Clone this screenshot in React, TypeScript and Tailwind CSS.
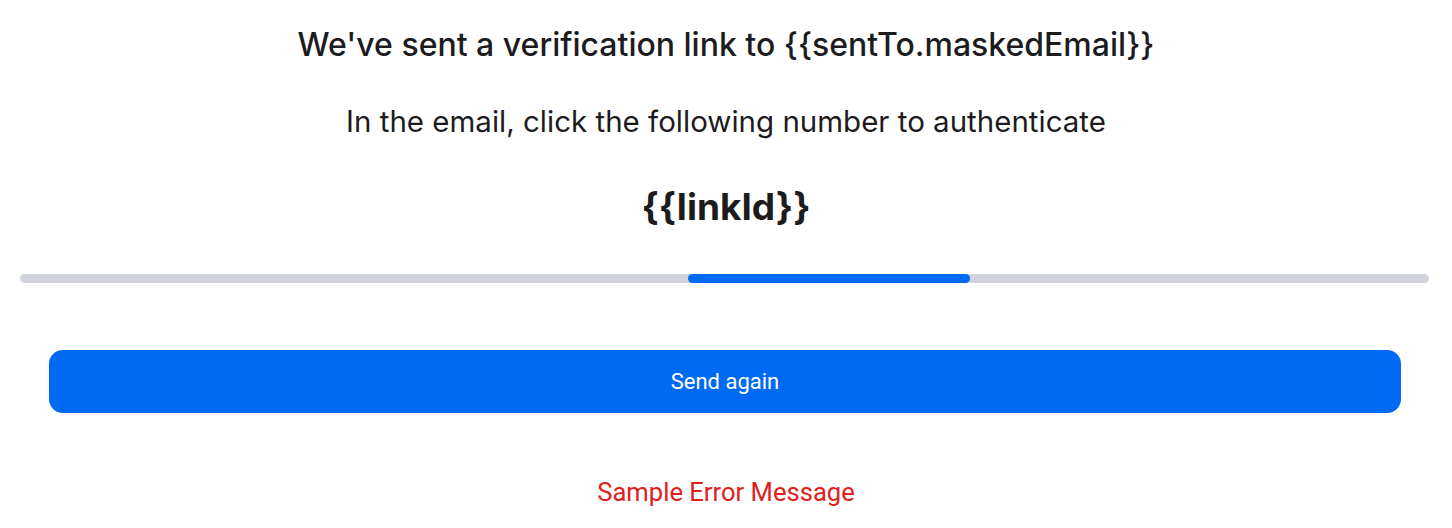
export default function App() {
  return (
    <div className="w-[1452px] h-[528px] bg-white flex flex-col items-center overflow-hidden" style={{ fontFamily: "Inter, 'Noto Sans', sans-serif" }}>
      <h1 className="mt-[25px] text-[32px] leading-[40px] font-medium text-[#1c1c1e]">
        We've sent a verification link to {"{{sentTo.maskedEmail}}"}
      </h1>
      <p className="mt-[38px] text-[29.5px] leading-[36px] text-[#1c1c1e]">
        In the email, click the following number to authenticate
      </p>
      <p className="mt-[46px] text-[37px] leading-[44px] font-bold text-[#1c1c1e]">{"{{linkId}}"}</p>

      {/* Progress */}
      <div className="self-start ml-[20px] mt-[45px] w-[1409px] h-[9px] rounded-full bg-[#d1d5db] relative">
        <div className="absolute top-0 left-[668px] h-[9px] w-[282px] rounded-full bg-[#006af5]" />
      </div>

      <button
        className="self-start ml-[49px] mt-[67px] w-[1352px] h-[63px] rounded-[14px] bg-[#006af5] text-white text-[22px]"
        style={{ fontFamily: "Roboto, sans-serif" }}
      >
        Send again
      </button>

      <p className="mt-[65px] text-[25.6px] leading-[28px] text-[#e0201c]" style={{ fontFamily: "Roboto, sans-serif" }}>
        Sample Error Message
      </p>
    </div>
  );
}
